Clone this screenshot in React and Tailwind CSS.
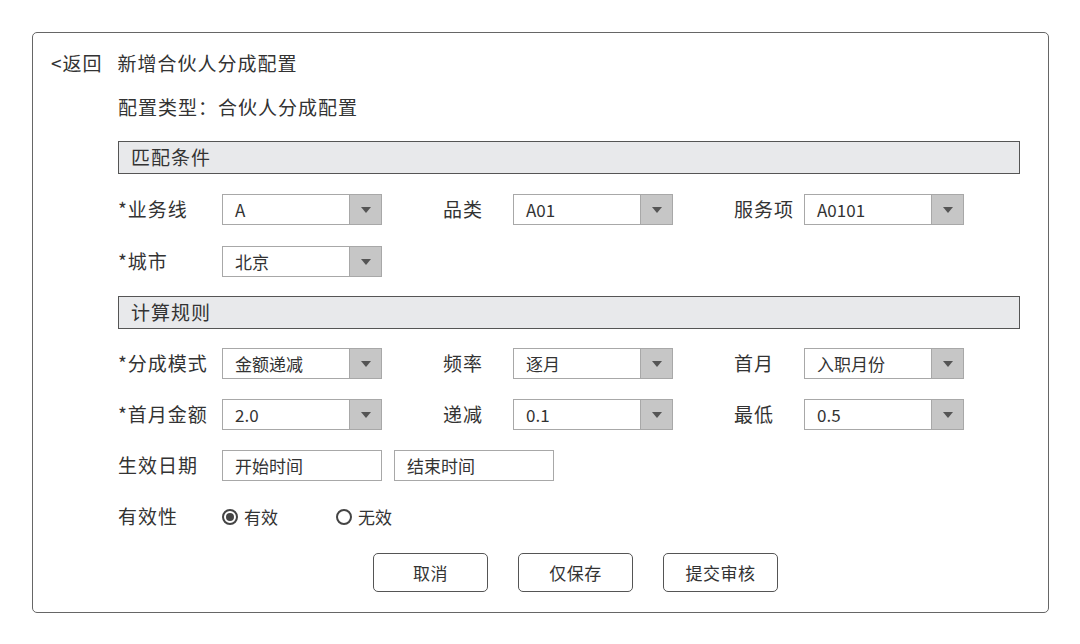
const font = { fontFamily: '"Noto Sans CJK SC", "Noto Sans", sans-serif' };

function Select({ value }) {
  return (
    <div className="flex h-[31px] w-[160px] border border-[#a8a8a8] bg-white">
      <div className="flex flex-1 items-center pl-3 text-[17px] text-[#333]">{value}</div>
      <div className="flex w-[32px] items-center justify-center border-l border-[#a8a8a8] bg-[#c6c6c6]">
        <svg width="10" height="6" viewBox="0 0 10 6">
          <path d="M0 0 L10 0 L5 6 Z" fill="#555" />
        </svg>
      </div>
    </div>
  );
}

function TextBox({ value }) {
  return (
    <div className="flex h-[31px] w-[160px] items-center border border-[#a8a8a8] bg-white pl-3 text-[17px] text-[#333]">
      {value}
    </div>
  );
}

function SectionHeader({ title }) {
  return (
    <div className="flex h-[33px] w-[902px] items-center border border-[#555] bg-[#e8e9eb] pl-[12px] text-[19px] tracking-[1px] text-[#333]">
      {title}
    </div>
  );
}

function Field({ label, value, labelWidth }) {
  return (
    <div className="flex items-center">
      <div className={`${labelWidth} text-[19px] tracking-[1px] text-[#333]`}>{label}</div>
      <Select value={value} />
    </div>
  );
}

function Row({ fields }) {
  return (
    <div className="flex h-[31px] items-center gap-[61px]">
      {fields.map((f, i) => (
        <Field
          key={i}
          label={f[0]}
          value={f[1]}
          labelWidth={i === 0 ? "w-[104px]" : "w-[70px]"}
        />
      ))}
    </div>
  );
}

function Radio({ checked, label }) {
  return (
    <div className="flex items-center gap-[6px]">
      <div className="flex h-[16px] w-[16px] items-center justify-center rounded-full border-2 border-[#444]">
        {checked && <div className="h-[8px] w-[8px] rounded-full bg-[#444]" />}
      </div>
      <span className="text-[17px] text-[#333]">{label}</span>
    </div>
  );
}

export default function App() {
  const buttons = ["取消", "仅保存", "提交审核"];

  return (
    <div className="h-[644px] w-[1080px] bg-white pl-[32px] pt-[32px]" style={font}>
      <div className="h-[581px] w-[1017px] rounded-[5px] border-[1.5px] border-[#666] pt-[16px]">
        {/* Header */}
        <div className="flex h-[28px] items-center gap-[15px] pl-[18px] text-[19px] tracking-[1px] text-[#333]">
          <span>&lt;返回</span>
          <span>新增合伙人分成配置</span>
        </div>

        <div className="pl-[85px]">
          <div className="mt-[16px] flex h-[28px] items-center text-[19px] tracking-[1px] text-[#333]">
            配置类型：合伙人分成配置
          </div>

          {/* Match conditions */}
          <div className="mt-[20px]">
            <SectionHeader title="匹配条件" />
          </div>
          <div className="mt-[20px] flex flex-col gap-[21px]">
            <Row
              fields={[
                ["*业务线", "A"],
                ["品类", "A01"],
                ["服务项", "A0101"],
              ]}
            />
            <Row fields={[["*城市", "北京"]]} />
          </div>

          {/* Calculation rules */}
          <div className="mt-[19px]">
            <SectionHeader title="计算规则" />
          </div>
          <div className="mt-[19px] flex flex-col gap-[20px]">
            <Row
              fields={[
                ["*分成模式", "金额递减"],
                ["频率", "逐月"],
                ["首月", "入职月份"],
              ]}
            />
            <Row
              fields={[
                ["*首月金额", "2.0"],
                ["递减", "0.1"],
                ["最低", "0.5"],
              ]}
            />
            <div className="flex h-[31px] items-center">
              <div className="w-[104px] text-[19px] tracking-[1px] text-[#333]">生效日期</div>
              <TextBox value="开始时间" />
              <div className="w-[12px]" />
              <TextBox value="结束时间" />
            </div>
            <div className="flex h-[31px] items-center">
              <div className="w-[104px] text-[19px] tracking-[1px] text-[#333]">有效性</div>
              <div className="w-[114px]">
                <Radio checked label="有效" />
              </div>
              <Radio label="无效" />
            </div>
          </div>
        </div>

        {/* Actions */}
        <div className="mt-[21px] flex gap-[30px] pl-[340px]">
          {buttons.map((b) => (
            <button
              key={b}
              className="flex h-[39px] w-[115px] items-center justify-center rounded-[5px] border-[1.5px] border-[#555] bg-white text-[17px] tracking-[0.5px] text-[#333]"
            >
              {b}
            </button>
          ))}
        </div>
      </div>
    </div>
  );
}
